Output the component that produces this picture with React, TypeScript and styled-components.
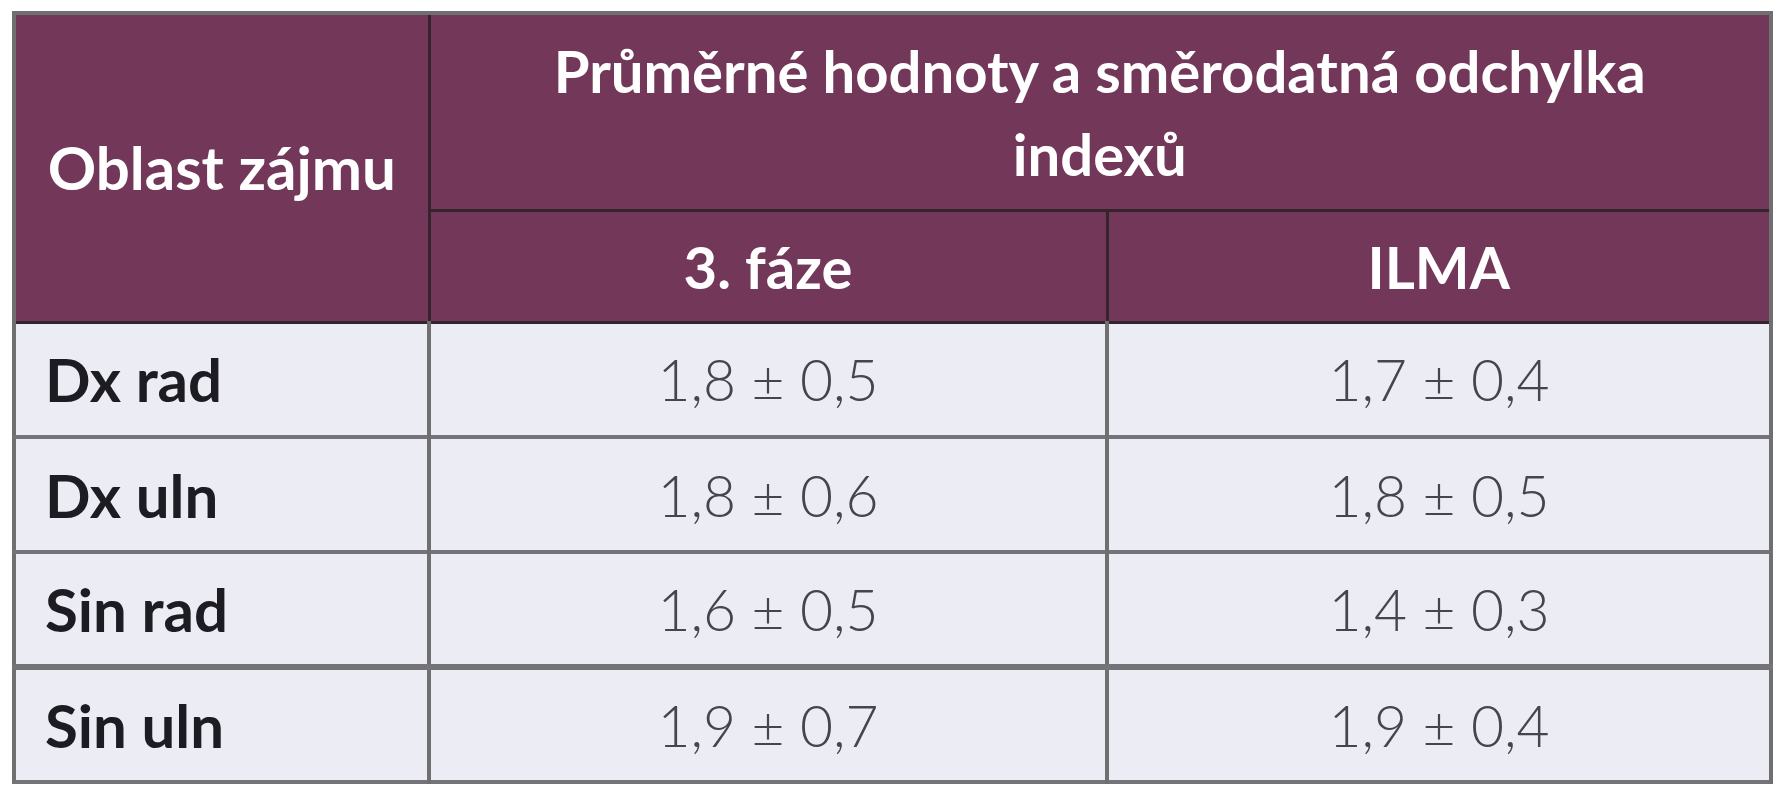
import styled, { createGlobalStyle } from "styled-components"

const GlobalStyle = createGlobalStyle`
  body {
    margin: 0;
    background: #ffffff;
    font-family: Lato, "Noto Sans", sans-serif;
  }
`

const Page = styled.div`
  padding: 11px 0 0 12px;
`

const Table = styled.table`
  width: 1761px;
  table-layout: fixed;
  border-collapse: collapse;
  border: 4px solid #6f6f72;
  font-family: Lato, "Noto Sans", sans-serif;
`

const HeadCell = styled.th`
  background: #733759;
  color: #ffffff;
  font-size: 58px;
  font-weight: 700;
  line-height: 83px;
  text-align: center;
  vertical-align: middle;
  border: 3px solid #35242e;
  padding: 0 80px;
`

// celula "Oblast zájmu" ocupa as duas linhas do cabecalho
const FirstHeadCell = styled(HeadCell)`
  padding: 0;
  font-size: 60px;
`

const Row = styled.tr<{ $thick?: boolean }>`
  height: 115px;
  background: #ececf5;
  border-bottom: ${(p) => (p.$thick ? "6px" : "4px")} solid #747478;
`

const Label = styled.td`
  padding: 0 0 0 29px;
  font-size: 60px;
  font-weight: 700;
  color: #1c1c22;
  border-right: 4px solid #6f6f72;
`

const Value = styled.td`
  text-align: center;
  font-size: 57px;
  font-weight: 300;
  color: #45454d;
  border-right: 4px solid #6f6f72;
`

const rows = [
  { name: "Dx rad", phase: "1,8 ± 0,5", ilma: "1,7 ± 0,4" },
  { name: "Dx uln", phase: "1,8 ± 0,6", ilma: "1,8 ± 0,5" },
  { name: "Sin rad", phase: "1,6 ± 0,5", ilma: "1,4 ± 0,3" },
  { name: "Sin uln", phase: "1,9 ± 0,7", ilma: "1,9 ± 0,4" },
]

export default function App() {
  return (
    <Page>
      <GlobalStyle />
      <Table>
        <colgroup>
          <col style={{ width: 415 }} />
          <col style={{ width: 678 }} />
          <col />
        </colgroup>
        <thead>
          <tr style={{ height: 197 }}>
            <FirstHeadCell rowSpan={2}>Oblast zájmu</FirstHeadCell>
            <HeadCell colSpan={2}>
              Průměrné hodnoty a směrodatná odchylka indexů
            </HeadCell>
          </tr>
          <tr style={{ height: 112 }}>
            <HeadCell>3. fáze</HeadCell>
            <HeadCell>ILMA</HeadCell>
          </tr>
        </thead>
        <tbody>
          {rows.map((r, i) => (
            <Row key={r.name} $thick={i === 2}>
              <Label>{r.name}</Label>
              <Value>{r.phase}</Value>
              <Value>{r.ilma}</Value>
            </Row>
          ))}
        </tbody>
      </Table>
    </Page>
  )
}
